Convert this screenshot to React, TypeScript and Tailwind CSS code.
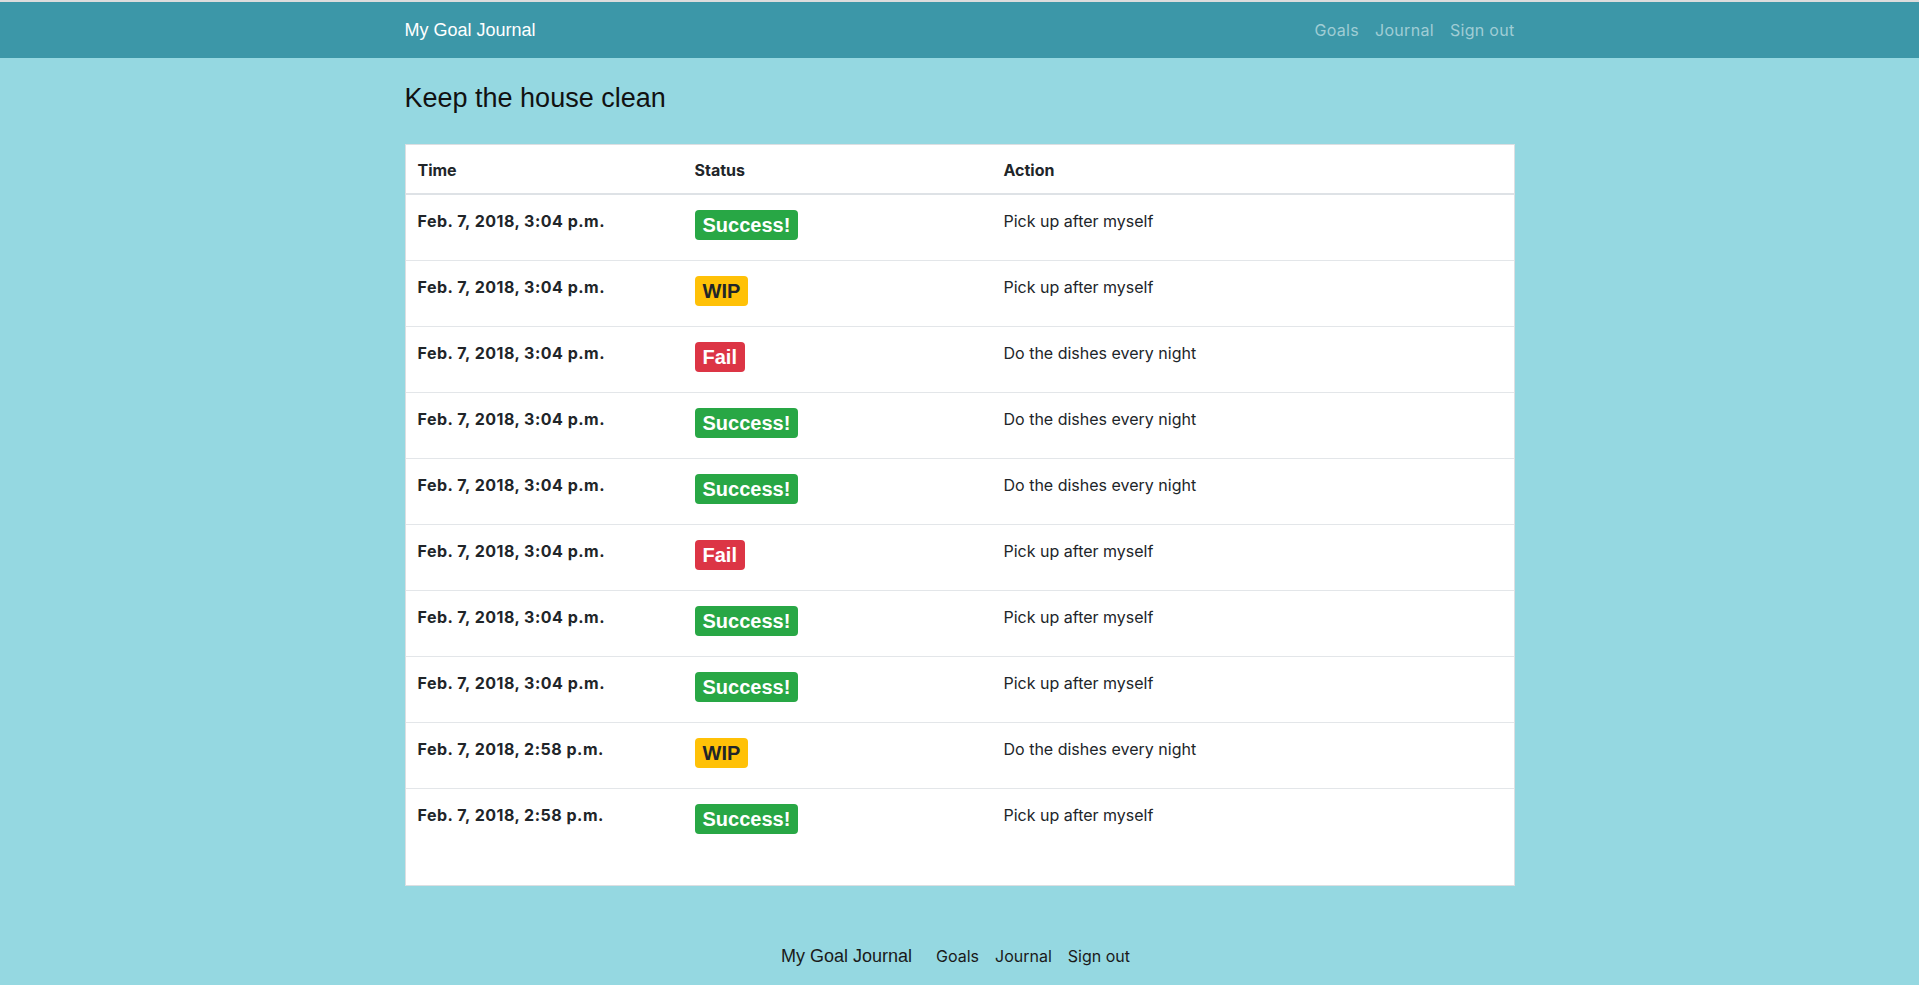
import React from "react";

type Status = "success" | "wip" | "fail";

const rows: { time: string; status: Status; action: string }[] = [
  { time: "Feb. 7, 2018, 3:04 p.m.", status: "success", action: "Pick up after myself" },
  { time: "Feb. 7, 2018, 3:04 p.m.", status: "wip", action: "Pick up after myself" },
  { time: "Feb. 7, 2018, 3:04 p.m.", status: "fail", action: "Do the dishes every night" },
  { time: "Feb. 7, 2018, 3:04 p.m.", status: "success", action: "Do the dishes every night" },
  { time: "Feb. 7, 2018, 3:04 p.m.", status: "success", action: "Do the dishes every night" },
  { time: "Feb. 7, 2018, 3:04 p.m.", status: "fail", action: "Pick up after myself" },
  { time: "Feb. 7, 2018, 3:04 p.m.", status: "success", action: "Pick up after myself" },
  { time: "Feb. 7, 2018, 3:04 p.m.", status: "success", action: "Pick up after myself" },
  { time: "Feb. 7, 2018, 2:58 p.m.", status: "wip", action: "Do the dishes every night" },
  { time: "Feb. 7, 2018, 2:58 p.m.", status: "success", action: "Pick up after myself" },
];

function Badge({ status }: { status: Status }) {
  if (status === "success")
    return (
      <span className="inline-block rounded-[4px] bg-[#28a745] px-2 py-[5px] text-[20px] font-bold leading-none text-white [font-family:'Liberation_Sans',Arial,sans-serif]">
        Success!
      </span>
    );
  if (status === "wip")
    return (
      <span className="inline-block rounded-[4px] bg-[#ffc107] px-2 py-[5px] text-[20px] font-bold leading-none text-[#212529] [font-family:'Liberation_Sans',Arial,sans-serif]">
        WIP
      </span>
    );
  return (
    <span className="inline-block rounded-[4px] bg-[#dc3545] px-2 py-[5px] text-[20px] font-bold leading-none text-white [font-family:'Liberation_Sans',Arial,sans-serif]">
      Fail
    </span>
  );
}

export default function App() {
  return (
    <div className="min-h-screen bg-[#95d8e1] text-[#212529] [font-family:Inter,'Noto_Sans',sans-serif]">
      <div className="h-[2px] bg-[#dcdcdc]" />
      <nav className="h-[56px] bg-[#3c97a8]">
        <div className="mx-auto flex h-full w-[1140px] items-center justify-between px-[15px]">
          <span className="text-[18px] leading-[30px] text-white [font-family:'Liberation_Sans',Arial,sans-serif]">
            My Goal Journal
          </span>
          <div className="flex text-[16px] leading-6 tracking-[0.3px] text-[#a0cdd5]">
            <span className="px-2">Goals</span>
            <span className="px-2">Journal</span>
            <span className="-mr-2 px-2">Sign out</span>
          </div>
        </div>
      </nav>

      <main className="mx-auto w-[1140px] px-[15px]">
        <h3 className="mt-[24px] text-[27px] leading-[33px] text-[#111] [font-family:'Liberation_Sans',Arial,sans-serif]">
          Keep the house clean
        </h3>
        <div className="mt-[29px] border border-[#dcdfe2] bg-white pb-[31px]">
          <div className="flex h-[50px] border-b-2 border-[#dee2e6] text-[16px] font-bold leading-6">
            <div className="w-[277px] px-3 pt-[13px]">Time</div>
            <div className="w-[309px] px-3 pt-[13px]">Status</div>
            <div className="flex-1 px-3 pt-[13px]">Action</div>
          </div>
          {rows.map((r, i) => (
            <div
              key={i}
              className={
                i === 0
                  ? "flex h-[65px] text-[16px] leading-6"
                  : "flex h-[66px] border-t border-[#e3e6e9] text-[16px] leading-6"
              }
            >
              <div className="w-[277px] px-3 pt-[14px] font-bold tracking-[0.5px]">{r.time}</div>
              <div className="w-[309px] px-3 pt-[15px]">
                <Badge status={r.status} />
              </div>
              <div className="flex-1 px-3 pt-[14px]">{r.action}</div>
            </div>
          ))}
        </div>
      </main>

      <footer className="mt-[50px] flex h-[40px] items-center justify-center">
        <span className="mr-4 text-[18px] leading-[30px] text-[#1a1a1a] [font-family:'Liberation_Sans',Arial,sans-serif]">
          My Goal Journal
        </span>
        <span className="px-2 text-[16px] leading-6 text-[#1a1a1a]">Goals</span>
        <span className="px-2 text-[16px] leading-6 text-[#1a1a1a]">Journal</span>
        <span className="px-2 text-[16px] leading-6 text-[#1a1a1a]">Sign out</span>
      </footer>
    </div>
  );
}
